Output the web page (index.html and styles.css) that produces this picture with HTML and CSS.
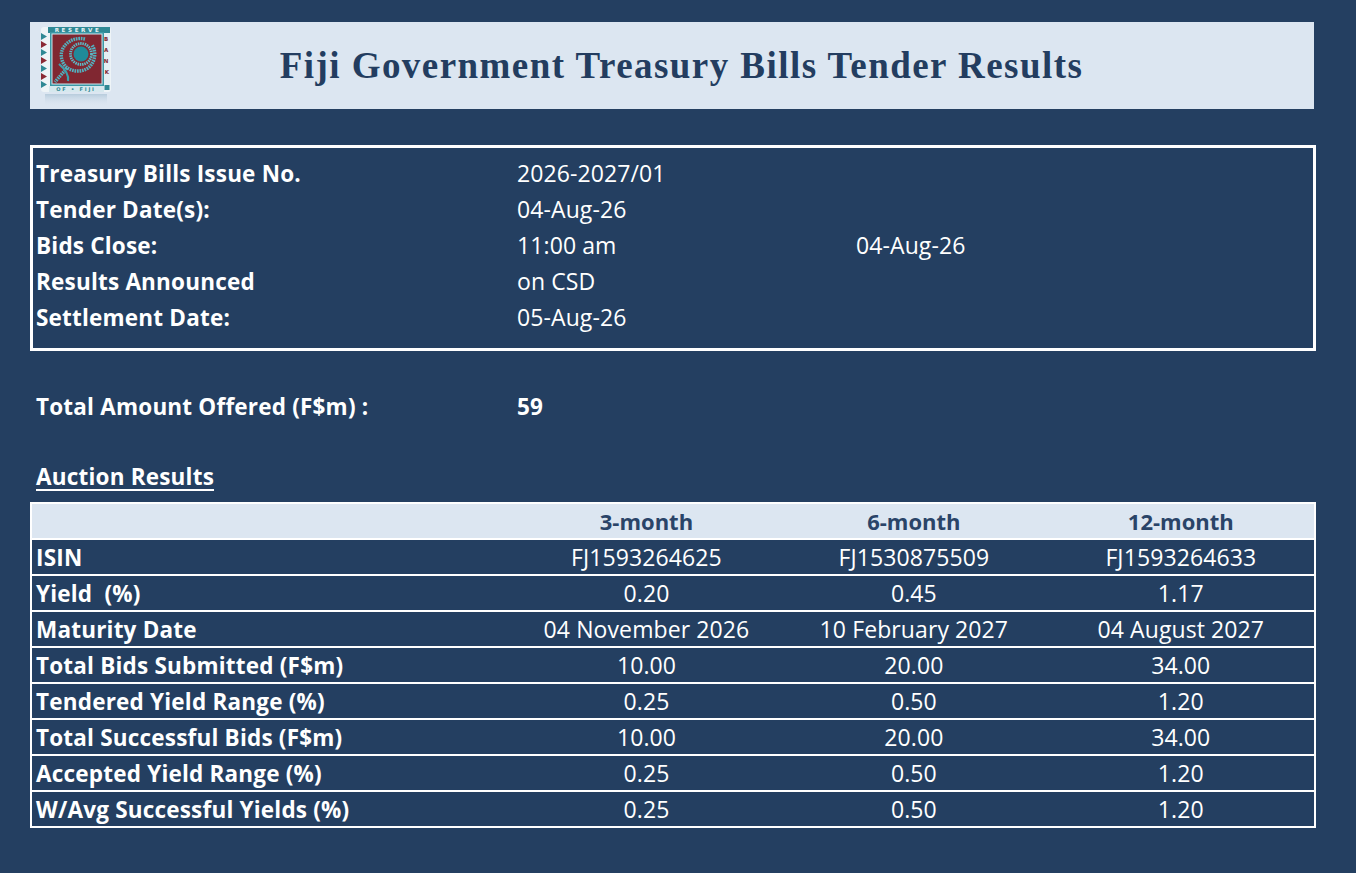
FILE: index.html
```html
<!DOCTYPE html>
<html lang="en">
<head>
<meta charset="utf-8">
<title>Fiji Government Treasury Bills Tender Results</title>
<link rel="stylesheet" href="styles.css">
</head>
<body>
<div class="page">
  <header class="header">
    <div class="logo">
      <svg width="70" height="80" viewBox="0 0 70 80" xmlns="http://www.w3.org/2000/svg">
        <defs>
          <linearGradient id="refl" x1="0" y1="0" x2="0" y2="1">
            <stop offset="0" stop-color="#b3c9da" stop-opacity="0.9"/>
            <stop offset="1" stop-color="#dce6f1" stop-opacity="0"/>
          </linearGradient>
        </defs>
        <rect x="0" y="0" width="70" height="65" rx="3" fill="#eef4f7"/>
        <rect x="7" y="0" width="62" height="6" fill="#2f8894"/>
        <text x="37" y="5.2" font-family="DejaVu Sans, sans-serif" font-size="5.6" font-weight="700" fill="#eaf4f6" text-anchor="middle" letter-spacing="2.6">RESERVE</text>
        <polygon points="0,6 6,9.5 0,13" fill="#2f8894"/>
        <polygon points="0,14 6,17.5 0,21" fill="#8b2a35"/>
        <polygon points="0,22 6,25.5 0,29" fill="#2f8894"/>
        <polygon points="0,30 6,33.5 0,37" fill="#8b2a35"/>
        <polygon points="0,38 6,41.5 0,45" fill="#2f8894"/>
        <polygon points="0,46 6,49.5 0,53" fill="#8b2a35"/>
        <polygon points="0,54 6,57.5 0,61" fill="#2f8894"/>
        <rect x="63" y="6" width="6" height="53" fill="#e4eff3"/>
        <text font-family="DejaVu Sans, sans-serif" font-size="5.5" font-weight="700" fill="#7f2630" text-anchor="middle">
          <tspan x="66" y="14">B</tspan>
          <tspan x="66" y="25">A</tspan>
          <tspan x="66" y="36">N</tspan>
          <tspan x="66" y="47">K</tspan>
        </text>
        <rect x="63.5" y="58" width="5" height="5" fill="#2f8894"/>
        <rect x="8" y="59" width="55" height="6" fill="#d6e8ee"/>
        <text x="35" y="64" font-family="DejaVu Sans, sans-serif" font-size="5" font-weight="700" fill="#2f8894" text-anchor="middle" letter-spacing="1.8">OF • FIJI</text>
        <rect x="9" y="5" width="54" height="54" fill="#3b98a6"/>
        <rect x="10.5" y="6.5" width="51" height="51" fill="#cfe5ec"/>
        <rect x="11.5" y="7.5" width="49" height="49" fill="#802731"/>
        <circle cx="40" cy="27" r="10.5" fill="none" stroke="#5cbac6" stroke-width="2.8" stroke-dasharray="1.5 0.8"/>
        <circle cx="40" cy="27" r="7.5" fill="#1f8a9a"/>
        <path d="M44 12 C 30 9, 17 20, 21 33 C 24 44, 38 47, 47 41 C 54 36, 56 25, 51 18" fill="none" stroke="#52b1bf" stroke-width="3.4" stroke-dasharray="1.7 0.8"/>
        <path d="M26 41 C 22 46, 18 50, 14 55" fill="none" stroke="#52b1bf" stroke-width="3.4" stroke-dasharray="1.7 0.8"/>
        <path d="M18 37 C 24 42, 28 48, 27 54" fill="none" stroke="#3da0ae" stroke-width="2.2"/>
        <rect x="4" y="67" width="62" height="12" fill="url(#refl)"/>
      </svg>
    </div>
    <h1 class="title">Fiji Government Treasury Bills Tender Results</h1>
  </header>

  <section class="info">
    <div class="info-row"><span class="lbl">Treasury Bills Issue No.</span><span class="val">2026-2027/01</span><span></span></div>
    <div class="info-row"><span class="lbl">Tender Date(s):</span><span class="val">04-Aug-26</span><span></span></div>
    <div class="info-row"><span class="lbl">Bids Close:</span><span class="val">11:00 am</span><span class="val">04-Aug-26</span></div>
    <div class="info-row"><span class="lbl">Results Announced</span><span class="val">on CSD</span><span></span></div>
    <div class="info-row"><span class="lbl">Settlement Date:</span><span class="val">05-Aug-26</span><span></span></div>
  </section>

  <div class="total-row"><span class="lbl">Total Amount Offered (F$m) :</span><span class="lbl">59</span><span></span></div>

  <h2 class="section-title">Auction Results</h2>

  <table class="results">
    <colgroup>
      <col class="c-label"><col class="c-val"><col class="c-val"><col class="c-val">
    </colgroup>
    <thead>
      <tr class="head-row"><th></th><th>3-month</th><th>6-month</th><th>12-month</th></tr>
    </thead>
    <tbody>
      <tr><th>ISIN</th><td>FJ1593264625</td><td>FJ1530875509</td><td>FJ1593264633</td></tr>
      <tr><th>Yield&nbsp; (%)</th><td>0.20</td><td>0.45</td><td>1.17</td></tr>
      <tr><th>Maturity Date</th><td>04 November 2026</td><td>10 February 2027</td><td>04 August 2027</td></tr>
      <tr><th>Total Bids Submitted (F$m)</th><td>10.00</td><td>20.00</td><td>34.00</td></tr>
      <tr><th>Tendered Yield Range (%)</th><td>0.25</td><td>0.50</td><td>1.20</td></tr>
      <tr><th>Total Successful Bids (F$m)</th><td>10.00</td><td>20.00</td><td>34.00</td></tr>
      <tr><th>Accepted Yield Range (%)</th><td>0.25</td><td>0.50</td><td>1.20</td></tr>
      <tr><th>W/Avg Successful Yields (%)</th><td>0.25</td><td>0.50</td><td>1.20</td></tr>
    </tbody>
  </table>
</div>
</body>
</html>
```

FILE: styles.css
```css
* { box-sizing: border-box; }

html, body {
  margin: 0;
  padding: 0;
  background: #243f61;
}

body {
  font-family: "Open Sans", "Liberation Sans", sans-serif;
  color: #ffffff;
  width: 1356px;
  min-height: 873px;
}

.page {
  padding: 22px 0 0 30px;
  width: 1316px;
}

.header {
  height: 87px;
  background: #dce6f1;
  display: flex;
  align-items: center;
  width: 1284px;
}

.logo {
  align-self: flex-start;
  margin-left: 11px;
  margin-top: 5px;
  width: 70px;
  height: 80px;
  flex: none;
}

.logo svg { display: block; }

.title {
  flex: 1;
  margin: 0;
  padding-right: 62px;
  text-align: center;
  font-family: "Liberation Serif", "Times New Roman", serif;
  font-weight: 700;
  font-size: 37px;
  letter-spacing: 1.45px;
  color: #233d60;
  line-height: 1;
}

.info {
  margin-top: 36px;
  border: 3px solid #ffffff;
  width: 1286px;
  height: 206px;
  padding: 7px 0 0 3px;
}

.info-row,
.total-row {
  display: grid;
  grid-template-columns: 481px 339px 1fr;
  height: 36px;
  align-items: center;
}

.total-row {
  margin-top: 37px;
  padding-left: 6px;
}

.lbl {
  font-weight: 700;
  font-size: 22.5px;
  letter-spacing: 0.2px;
  white-space: nowrap;
}

.val {
  font-size: 23px;
  letter-spacing: 0.1px;
  white-space: nowrap;
}

.section-title {
  margin: 35px 0 0 0;
  padding-left: 6px;
  height: 36px;
  line-height: 36px;
  font-size: 22.5px;
  font-weight: 700;
  letter-spacing: 0.2px;
  text-decoration: underline;
  text-decoration-thickness: 2px;
  text-underline-offset: 4px;
}

.results {
  margin-top: 7px;
  width: 1286px;
  border-collapse: collapse;
  border: 2px solid #ffffff;
  table-layout: fixed;
}

.c-label { width: 481px; }
.c-val { width: 267px; }

.results tr {
  height: 36px;
  border-top: 2px solid #ffffff;
}

.results th,
.results td {
  padding: 0;
  height: 34px;
  white-space: nowrap;
}

.results tbody th {
  text-align: left;
  padding-left: 4px;
  font-weight: 700;
  font-size: 22.5px;
  letter-spacing: 0.2px;
}

.results td {
  text-align: center;
  font-size: 23px;
  letter-spacing: 0.1px;
}

.head-row {
  background: #dce6f1;
}

.head-row th {
  color: #2a4468;
  font-weight: 700;
  font-size: 22px;
  text-align: center;
}
```
